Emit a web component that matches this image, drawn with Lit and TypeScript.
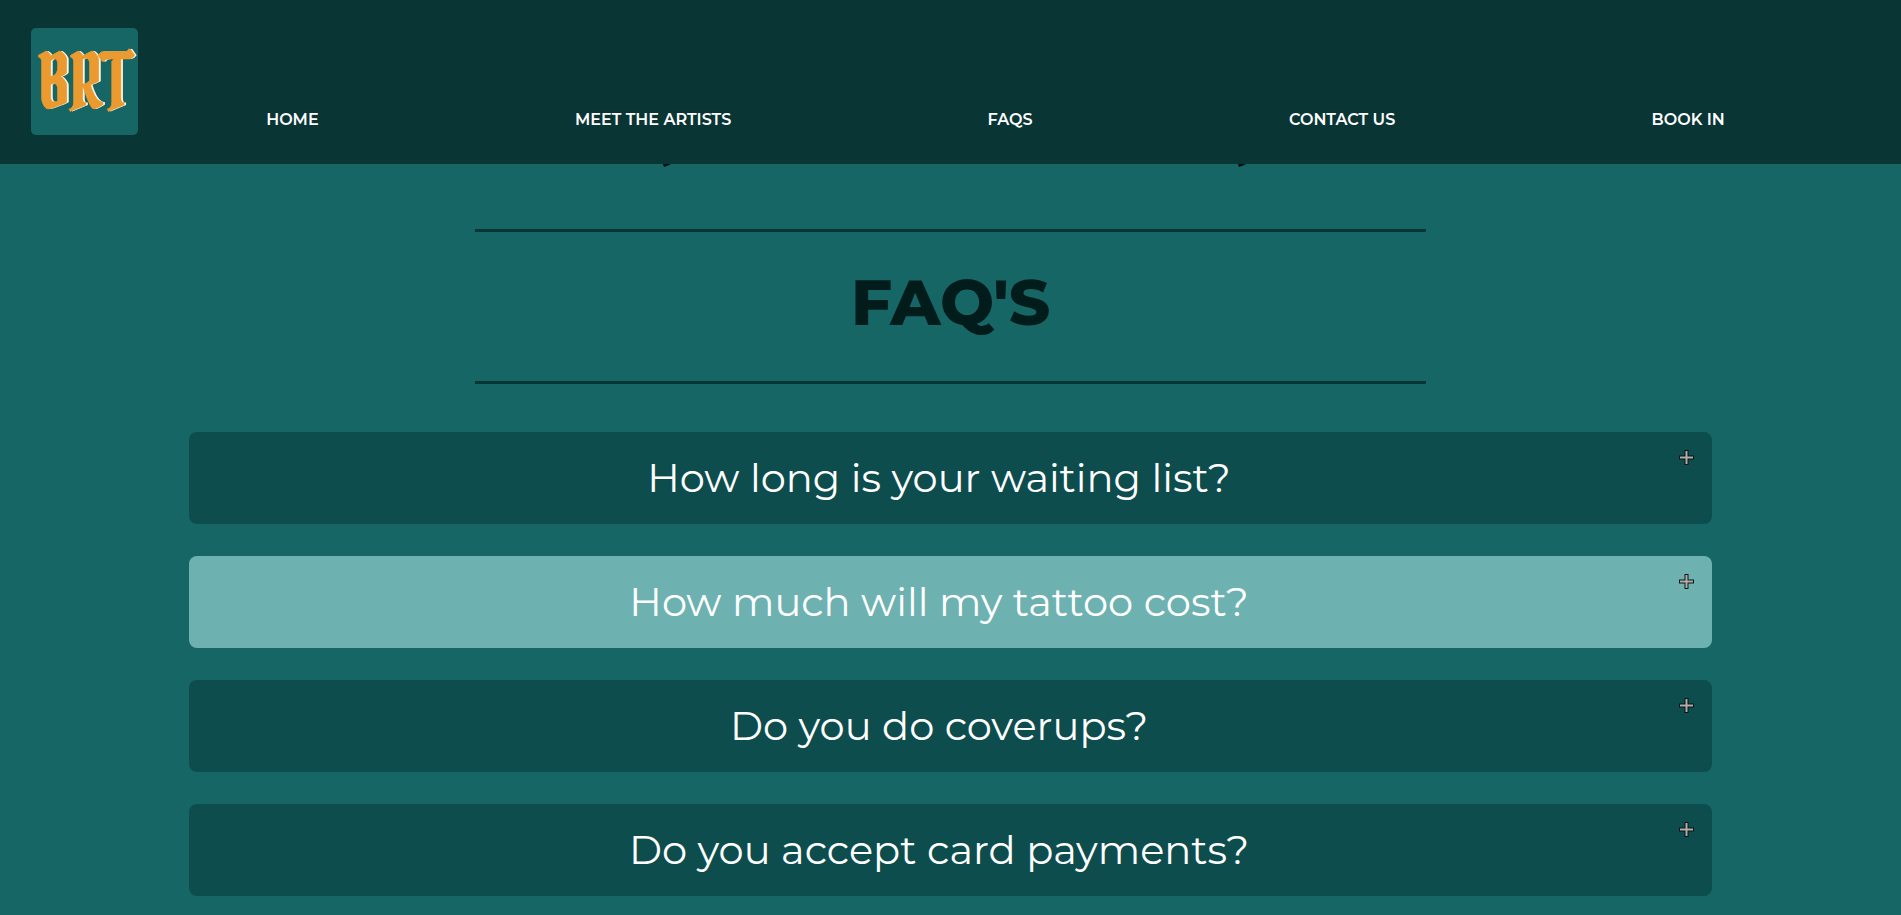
import { LitElement, html, css } from "lit";
import { customElement, property, state } from "lit/decorators.js";
import { classMap } from "lit/directives/class-map.js";

@customElement("site-header")
class SiteHeader extends LitElement {
  static styles = css`
    :host {
      display: block;
      background: #093535;
    }
    .bar {
      display: flex;
      align-items: flex-end;
      padding: 28px 48px 29px 31px;
    }
    .logo {
      display: block;
      flex: none;
      width: 107px;
      height: 107px;
      border-radius: 5px;
      background: #166666;
    }
    .logo svg {
      display: block;
    }
    .logo text {
      font-family: "Pirata One", "Roboto Condensed", "Liberation Serif", serif;
      font-size: 76px;
      font-weight: 400;
      text-anchor: middle;
    }
    .shade {
      fill: #fdf6e6;
    }
    .face {
      fill: #eb9a2f;
      stroke: #eb9a2f;
      stroke-width: 0.5;
    }
    nav {
      flex: 1;
    }
    ul {
      display: flex;
      flex-wrap: wrap;
      justify-content: space-around;
      margin: 0;
      padding: 0 0 3px;
      list-style: none;
    }
    .link {
      display: block;
      color: #ffffff;
      font-size: 16px;
      font-weight: 600;
      line-height: 24px;
      text-decoration: none;
      text-transform: uppercase;
    }
  `;

  private links = ["Home", "Meet the artists", "FAQs", "Contact us", "Book in"];

  render() {
    return html`
      <header class="bar">
        <a class="logo" href="#home" aria-label="BRT home">
          <svg width="107" height="107" viewBox="0 0 107 107" aria-hidden="true">
            <text class="shade" x="55" y="81">BRT</text>
            <text class="face" x="53" y="81">BRT</text>
          </svg>
        </a>
        <nav>
          <ul>
            ${this.links.map((l) => html`<li><a class="link" href="#">${l}</a></li>`)}
          </ul>
        </nav>
      </header>
    `;
  }
}

@customElement("faq-item")
class FaqItem extends LitElement {
  @property() question = "";
  @property({ type: Boolean }) active = false;

  static styles = css`
    :host {
      display: block;
    }
    .panel {
      display: flex;
      align-items: flex-start;
      box-sizing: border-box;
      width: 100%;
      margin: 0;
      padding: 18px;
      border: 0;
      border-radius: 8px;
      background: #0e4d4d;
      color: #ffffff;
      font: inherit;
      font-size: 40px;
      line-height: 56px;
      cursor: pointer;
    }
    .panel:hover,
    .panel.active {
      background: #6db2b1;
    }
    .label {
      flex: 1;
      text-align: center;
    }
    .plus {
      flex: none;
      margin-left: 8px;
    }
  `;

  render() {
    return html`
      <button class=${classMap({ panel: true, active: this.active })} type="button" aria-expanded="false">
        <span class="label">${this.question}</span>
        <svg class="plus" width="15" height="15" viewBox="0 0 15 15" aria-hidden="true">
          <path d="M5.500 0h4v5.500h5.500v4h-5.500v5.500h-4v-5.500h-5.500v-4h5.500z" fill="#0a1414" />
          <path d="M6.500 1h2v5.500h5.500v2h-5.500v5.500h-2v-5.500h-5.500v-2h5.500z" fill="#b4acac" />
        </svg>
      </button>
    `;
  }
}

@customElement("app-root")
class AppRoot extends LitElement {
  @state() private questions = [
    { text: "How long is your waiting list?", active: false },
    { text: "How much will my tattoo cost?", active: true },
    { text: "Do you do coverups?", active: false },
    { text: "Do you accept card payments?", active: false },
  ];

  static styles = css`
    :host {
      display: block;
      box-sizing: border-box;
      min-height: 100vh;
      padding-bottom: 19px;
      background: #166666;
      color: #021c1b;
      font-family: Montserrat, Inter, "Open Sans", sans-serif;
    }
    .flourish {
      display: block;
      margin: 0 auto;
    }
    .title {
      box-sizing: border-box;
      width: 50%;
      margin: 61px auto 48px;
      padding: 30px 0 39px;
      border-top: 3px solid #093535;
      border-bottom: 3px solid #093535;
      font-size: 64px;
      font-weight: 800;
      line-height: 80px;
      text-align: center;
    }
    .list {
      display: grid;
      gap: 32px;
      padding: 0 189px;
    }
  `;

  render() {
    return html`
      <site-header></site-header>
      <main>
        <svg class="flourish" width="592" height="4" viewBox="0 0 592 4" aria-hidden="true">
          <path d="M8 0h8l-3 1.500l-4 1.500z M583 0h8l-3 1.500l-4 1.500z" fill="#010c0c" />
        </svg>
        <h1 class="title">FAQ'S</h1>
        <section class="list">
          ${this.questions.map(
            (q) => html`<faq-item .question=${q.text} ?active=${q.active}></faq-item>`
          )}
        </section>
      </main>
    `;
  }
}
